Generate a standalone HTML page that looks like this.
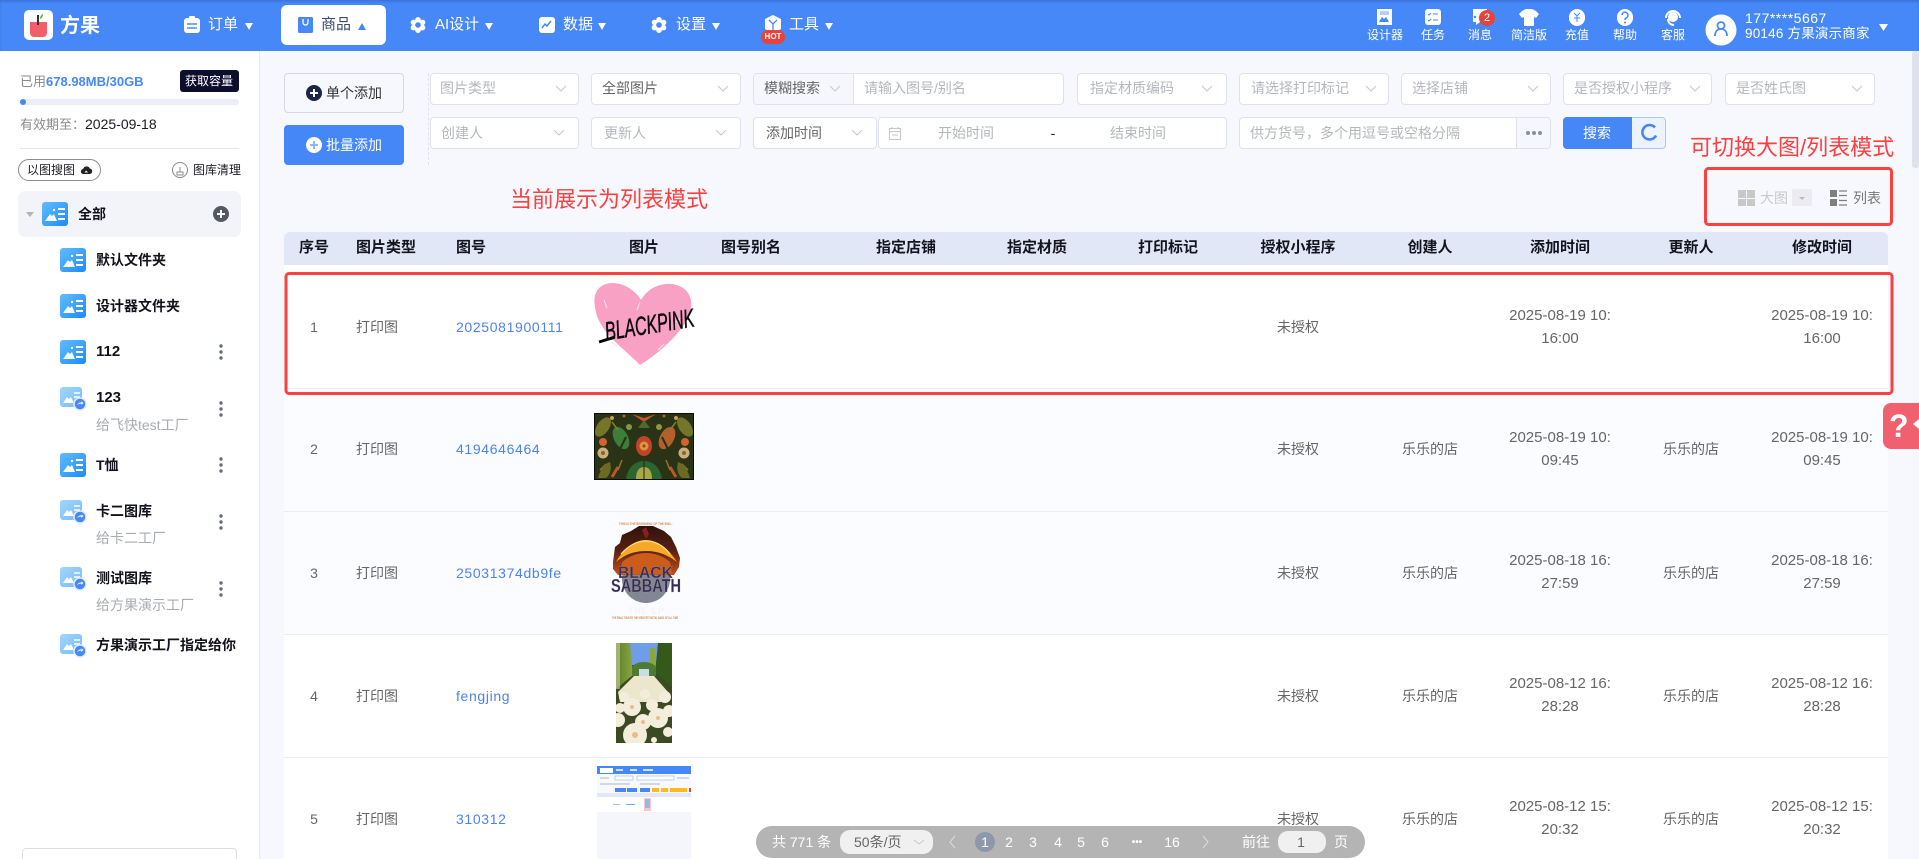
<!DOCTYPE html>
<html lang="zh"><head><meta charset="utf-8"><title>方果</title>
<style>
*{box-sizing:border-box;margin:0;padding:0}
html,body{width:1919px;height:859px;overflow:hidden;background:#f6f8fd}
body{position:relative;font-family:"Liberation Sans","Noto Sans CJK SC",sans-serif;font-size:14px;color:#666}
.a,.t,.c{position:absolute}
.t,.c{white-space:nowrap;line-height:20px;height:20px}
.c{transform:translateX(-50%)}
.b{font-weight:700}
.s{position:absolute;background:#fff;border:1px solid #dfe2ea;border-radius:4px}
.ph{color:#b4b7bd}
.n{color:#fff;font-size:15px}
.m{color:#fff;font-size:12px}
.h{font-size:15px;font-weight:700;color:#14141e}
.k{color:#666}
.l{color:#4c84ec;letter-spacing:.65px}
.tr{font-size:15px;color:#666}
.sb{font-weight:700;color:#12121c}
.su{color:#a9acb3}
.p{color:#fff;font-size:14px}
</style></head><body>

<!-- layout backgrounds -->
<div class="a" style="left:0;top:0;width:1919px;height:51px;background:#4688f7;box-shadow:inset 0 2px 3px -1px rgba(30,50,120,.35)"></div>
<div class="a" style="left:0;top:51px;width:260px;height:808px;background:#fff;border-right:1px solid #e8eaf3"></div>
<div class="a" style="left:1912px;top:51px;width:7px;height:808px;background:#f6f7fa"></div>
<div class="a" style="left:1912px;top:51px;width:7px;height:117px;background:#dfe2ea;border-radius:3px"></div>

<!-- nav active -->
<div class="a" style="left:281px;top:5px;width:105px;height:40px;background:#fff;border-radius:6px"></div>

<!-- sidebar blocks -->
<div class="a" style="left:180px;top:70px;width:59px;height:22px;background:#0d0d2d;border-radius:3px"></div>
<div class="a" style="left:20px;top:99px;width:219px;height:6px;background:#ebeef5;border-radius:3px"></div>
<div class="a" style="left:20px;top:99px;width:6px;height:6px;background:#4688f7;border-radius:3px"></div>
<div class="a" style="left:20px;top:148px;width:219px;height:1px;background:#e5e7ec"></div>
<div class="a" style="left:18px;top:159px;width:83px;height:22px;border:1px solid #8c8c8c;border-radius:11px"></div>
<div class="a" style="left:18px;top:191px;width:223px;height:46px;background:#f2f4f9;border-radius:7px"></div>
<div class="a" style="left:22px;top:848px;width:215px;height:20px;border:1px solid #dcdde4;border-radius:4px;background:#fff"></div>

<!-- buttons -->
<div class="a" style="left:284px;top:73px;width:120px;height:40px;border:1px solid #d5d8e0;border-radius:4px"></div>
<div class="a" style="left:284px;top:125px;width:120px;height:40px;background:#4587f6;border-radius:4px"></div>
<div class="a" style="left:428px;top:73px;height:92px;border-left:1px dashed #e0e2e8"></div>

<!-- filters -->
<div class="s" style="left:430px;top:73px;width:149px;height:32px"></div>
<div class="s" style="left:591px;top:73px;width:150px;height:32px"></div>
<div class="s" style="left:753px;top:73px;width:311px;height:32px"></div>
<div class="a" style="left:754px;top:74px;width:100px;height:30px;background:#f5f7fc;border-right:1px solid #dfe2ea;border-radius:3px 0 0 3px"></div>
<div class="s" style="left:1077px;top:73px;width:150px;height:32px"></div>
<div class="s" style="left:1239px;top:73px;width:150px;height:32px"></div>
<div class="s" style="left:1401px;top:73px;width:150px;height:32px"></div>
<div class="s" style="left:1563px;top:73px;width:149px;height:32px"></div>
<div class="s" style="left:1725px;top:73px;width:150px;height:32px"></div>
<div class="s" style="left:430px;top:117px;width:149px;height:32px"></div>
<div class="s" style="left:591px;top:117px;width:150px;height:32px"></div>
<div class="s" style="left:753px;top:117px;width:124px;height:32px"></div>
<div class="s" style="left:878px;top:117px;width:349px;height:32px"></div>
<div class="s" style="left:1239px;top:117px;width:312px;height:32px"></div>
<div class="a" style="left:1516px;top:118px;width:34px;height:30px;background:#f5f7fc;border-left:1px solid #dfe2ea;border-radius:0 3px 3px 0"></div>
<div class="a" style="left:1563px;top:117px;width:70px;height:32px;background:#4587f6;border-radius:4px 0 0 4px"></div>
<div class="a" style="left:1632px;top:117px;width:34px;height:32px;background:#ecf3fe;border:1px solid #a9c6fa;border-left:0;border-radius:0 4px 4px 0"></div>

<!-- table backgrounds -->
<div class="a" style="left:284px;top:232px;width:1604px;height:33px;background:#e1e7f6;border-radius:6px 6px 0 0"></div>
<div class="a" style="left:284px;top:265px;width:1604px;height:124px;background:#fff;border-bottom:1px solid #e9ecf3"></div>
<div class="a" style="left:284px;top:389px;width:1604px;height:123px;background:#fbfcff;border-bottom:1px solid #e9ecf3"></div>
<div class="a" style="left:284px;top:512px;width:1604px;height:123px;background:#fbfcff;border-bottom:1px solid #e9ecf3"></div>
<div class="a" style="left:284px;top:635px;width:1604px;height:123px;background:#fff;border-bottom:1px solid #e9ecf3"></div>
<div class="a" style="left:284px;top:758px;width:1604px;height:101px;background:#fff"></div>

<!-- all icons + thumbnails in page coords -->
<svg class="a" style="left:0;top:0" width="1919" height="859" viewBox="0 0 1919 859" fill="none">
<defs>
<linearGradient id="g" x1="0" y1="0" x2="1" y2="1"><stop offset="0" stop-color="#62bcfb"/><stop offset="1" stop-color="#1b8cfe"/></linearGradient>
<linearGradient id="fire" x1="0" y1="0" x2="0" y2="1"><stop offset="0" stop-color="#2e120c"/><stop offset=".5" stop-color="#5a2012"/><stop offset="1" stop-color="#c4501c"/></linearGradient>
<linearGradient id="wall" x1="0" y1="0" x2="1" y2="0"><stop offset="0" stop-color="#5c7e2a"/><stop offset="1" stop-color="#8aa73e"/></linearGradient>
<symbol id="f" viewBox="0 0 26 24"><rect width="26" height="24" rx="3" fill="url(#g)"/><path d="M3 19l5-7 2 2 2-2 3 7z" fill="#fff" opacity=".95"/><circle cx="12" cy="8" r="1.2" fill="#fff"/><path d="M16 7h7M16 12h7M16 17h7" stroke="#fff" stroke-width="2"/></symbol>
<symbol id="f2" viewBox="0 0 26 24"><rect width="22" height="20" rx="3" fill="url(#g)" opacity=".6"/><path d="M3 16l4-6 2 2 2-2 3 6z" fill="#fff"/><path d="M14 6h6M14 10h6M14 14h4" stroke="#fff" stroke-width="1.6"/><circle cx="20" cy="17" r="6" fill="#4688f7" stroke="#dfe9fd" stroke-width="1.5"/><path d="M17 18c1-2 3-3 5-2.500l-1-1.500 2.500 2-2.500 2 .5-1.200c-1.500-.5-3 .2-4.500 1.200z" fill="#fff"/></symbol>
<symbol id="ch" viewBox="0 0 12 8"><path d="M1 1l5 5 5-5" stroke="#c4c7cd" stroke-width="1"/></symbol>
<symbol id="d3" viewBox="0 0 4 16"><circle cx="2" cy="2" r="1.700" fill="#666c78"/><circle cx="2" cy="8" r="1.700" fill="#666c78"/><circle cx="2" cy="14" r="1.700" fill="#666c78"/></symbol>
<symbol id="gear" viewBox="0 0 16 16"><g fill="#fff"><circle cx="8" cy="8" r="5.500"/><circle cx="8" cy="2.800" r="2.800"/><circle cx="8" cy="13.200" r="2.800"/><circle cx="3.500" cy="5.400" r="2.800"/><circle cx="12.500" cy="5.400" r="2.800"/><circle cx="3.500" cy="10.600" r="2.800"/><circle cx="12.500" cy="10.600" r="2.800"/></g><circle cx="8" cy="8" r="2.800" fill="#4688f7"/></symbol>
<clipPath id="r5"><rect x="597" y="766" width="94" height="93"/></clipPath>
<clipPath id="r4"><rect x="616" y="643" width="56" height="100"/></clipPath>
<clipPath id="r2"><rect x="594" y="413" width="100" height="67"/></clipPath>
</defs>

<!-- logo -->
<rect x="24" y="10" width="29" height="30" rx="5" fill="#fff"/>
<path d="M30 22h17v11a4 4 0 0 1-4 4H34a4 4 0 0 1-4-4z" fill="#f0606a"/>
<path d="M38 15v10" stroke="#333" stroke-width="2"/><path d="M40 19c0-3 1-4 3-5 0 3-1 4-3 5z" fill="#5fb548"/>

<!-- nav icons -->
<rect x="184" y="18" width="16" height="15" rx="3" fill="#fff"/><rect x="189" y="16" width="6" height="4" rx="1" fill="#fff"/><path d="M187 24h10M187 28h10" stroke="#4688f7" stroke-width="1.500"/>
<rect x="298" y="17" width="15" height="16" rx="1.500" fill="#4688f7"/><path d="M303 19v3.500a2.500 2.500 0 0 0 5 0v-3.500" stroke="#fff" stroke-width="1.300"/>
<use href="#gear" x="410" y="17" width="16" height="16"/>
<rect x="539" y="17" width="16" height="16" rx="3" fill="#fff"/><path d="M542 28l3-4 2 2 4-5" stroke="#4688f7" stroke-width="1.500"/>
<use href="#gear" x="651" y="17" width="16" height="16"/>
<path d="M765 19l8-4 8 4v10l-8 4-8-4z" fill="#fff"/><path d="M769 20l4 4 4-4M773 24v7" stroke="#4688f7" stroke-width="1.300"/>
<rect x="761" y="30" width="24" height="14" rx="7" fill="#e5433c"/>
<!-- carets -->
<path d="M245 23h8l-4 7z" fill="#fff"/><path d="M358 30h8l-4-7z" fill="#4688f7"/><path d="M485 23h8l-4 7z" fill="#fff"/><path d="M598 23h8l-4 7z" fill="#fff"/><path d="M712 23h8l-4 7z" fill="#fff"/><path d="M825 23h8l-4 7z" fill="#fff"/>
<!-- right icons -->
<rect x="1377" y="9" width="15" height="16" fill="#fff"/><path d="M1379 22l3-5 2 2 2-2 3 5z" fill="#4688f7"/><rect x="1380" y="11" width="9" height="4" fill="#4688f7" opacity=".4"/>
<rect x="1425" y="9" width="16" height="16" rx="3" fill="#fff"/><path d="M1428 14l1 1 2-2M1428 20l1 1 2-2M1433 14h5M1433 20h5" stroke="#4688f7" stroke-width="1"/>
<path d="M1473 9h14v13h-7l-4 3v-3h-3z" fill="#fff"/><circle cx="1475" cy="17" r="1.200" fill="#4688f7"/>
<path d="M1522 11l4-2h6l4 2 3 3-3 4-2-1v9h-10v-9l-2 1-3-4z" fill="#fff"/>
<rect x="1569" y="9" width="16" height="17" rx="8" fill="#fff"/><path d="M1574 13l3 3 3-3M1577 16v6M1574 18h6" stroke="#4688f7" stroke-width="1"/>
<rect x="1617" y="9" width="16" height="17" rx="8" fill="#fff"/><path d="M1622 15a3 3 0 1 1 4 3l-1 1v1" stroke="#4688f7" stroke-width="1.500"/><circle cx="1625" cy="22.500" r="1" fill="#4688f7"/>
<path d="M1666 18a7 7 0 0 1 14 0" stroke="#fff" stroke-width="2"/><circle cx="1673" cy="17" r="5" fill="#fff"/><path d="M1668 19c0 4 3 6 6 6" stroke="#fff" stroke-width="2"/>
<circle cx="1721" cy="30" r="15.500" fill="#fff"/><circle cx="1721" cy="25.500" r="3.500" stroke="#4688f7" stroke-width="1.800"/><path d="M1715 36c0-4 2-7 6-7s6 3 6 7" stroke="#4688f7" stroke-width="1.800"/>
<path d="M1879 24h9l-4.500 7z" fill="#fff"/>

<!-- sidebar icons -->
<path d="M83.500 174a2.500 2.500 0 0 1-.3-5 3.500 3.500 0 0 1 6.600-.5 2.800 2.800 0 0 1 .2 5.500z" fill="#222"/><path d="M86.200 170.500l-1.800 2h3.600z" fill="#fff"/>
<circle cx="180" cy="170" r="7.500" stroke="#888" stroke-width="1"/><path d="M177 175v-3h6v3zM180 172v-5" stroke="#888" stroke-width="1"/>
<path d="M26 212h8l-4 5z" fill="#b0b3b8"/>
<use href="#f" x="42" y="202" width="26" height="24"/>
<circle cx="221" cy="214" r="8" fill="#555861"/><path d="M217 214h8M221 210v8" stroke="#fff" stroke-width="2"/>
<use href="#f" x="60" y="248" width="26" height="24"/>
<use href="#f" x="60" y="294" width="26" height="24"/>
<use href="#f" x="60" y="340" width="26" height="24"/>
<use href="#f" x="60" y="453" width="26" height="24"/>
<use href="#f2" x="60" y="387" width="26" height="24"/>
<use href="#f2" x="60" y="500" width="26" height="24"/>
<use href="#f2" x="60" y="567" width="26" height="24"/>
<use href="#f2" x="60" y="634" width="26" height="24"/>
<use href="#d3" x="219" y="344" width="4" height="16"/>
<use href="#d3" x="219" y="401" width="4" height="16"/>
<use href="#d3" x="219" y="457" width="4" height="16"/>
<use href="#d3" x="219" y="514" width="4" height="16"/>
<use href="#d3" x="219" y="581" width="4" height="16"/>

<!-- add buttons -->
<circle cx="314" cy="93" r="8" fill="#1a2548"/><path d="M310 93h8M314 89v8" stroke="#fff" stroke-width="2"/>
<circle cx="314" cy="145" r="8" fill="#fff"/><path d="M310 145h8M314 141v8" stroke="#8fb6fa" stroke-width="2"/>

<!-- chevrons -->
<use href="#ch" x="555" y="85" width="12" height="8"/>
<use href="#ch" x="717" y="85" width="12" height="8"/>
<use href="#ch" x="829" y="85" width="12" height="8"/>
<use href="#ch" x="1201" y="85" width="12" height="8"/>
<use href="#ch" x="1365" y="85" width="12" height="8"/>
<use href="#ch" x="1527" y="85" width="12" height="8"/>
<use href="#ch" x="1689" y="85" width="12" height="8"/>
<use href="#ch" x="1851" y="85" width="12" height="8"/>
<use href="#ch" x="553" y="129" width="12" height="8"/>
<use href="#ch" x="715" y="129" width="12" height="8"/>
<use href="#ch" x="851" y="129" width="12" height="8"/>
<!-- date + dots + refresh -->
<rect x="889.500" y="128.500" width="11" height="11" stroke="#c4c7cd"/><path d="M889 131.500h12M892 127v2M898 127v2M892 135h6" stroke="#c4c7cd"/>
<circle cx="1528" cy="133" r="2" fill="#8a8f99"/><circle cx="1534" cy="133" r="2" fill="#8a8f99"/><circle cx="1540" cy="133" r="2" fill="#8a8f99"/>
<path d="M1655 127.500a7.200 7.200 0 1 0 1 8" stroke="#4a86ee" stroke-width="2.600"/>

<!-- view switch -->
<rect x="1705.500" y="168.500" width="186" height="56" rx="3" stroke="#fb4040" stroke-width="3"/>
<g fill="#c8c8c8"><rect x="1738" y="190" width="8" height="8"/><rect x="1747" y="190" width="8" height="8"/><rect x="1738" y="199" width="8" height="7"/><rect x="1747" y="199" width="8" height="7"/></g>
<rect x="1792" y="189" width="20" height="17" rx="2" fill="#ececf0"/><path d="M1799 197h6l-3 3z" fill="#bbb"/>
<g fill="#7f7f7f"><rect x="1830" y="190" width="7" height="7"/><rect x="1830" y="199" width="7" height="7"/></g><path d="M1839 191h8M1839 195.500h8M1839 200.500h8M1839 205h8" stroke="#7f7f7f" stroke-width="1.300"/>
<rect x="286" y="273.500" width="1606" height="120" rx="3" stroke="#fb4040" stroke-width="3"/>

<!-- row1 heart -->
<path d="M640 365C628 352 604 336 597 316C592 300 594 288 606 284C618 280 634 288 641 300C648 288 660 283 672 284C686 286 693 296 691 308C689 322 676 336 664 347C656 354 648 360 640 365z" fill="#f9a1c4"/>
<path d="M604 300l3 8M640 302l-3 8M658 350l6-6M676 322l6-5M612 342l5 5" stroke="#fde2ec" stroke-width="1"/>
<path d="M599 342l16-5" stroke="#000" stroke-width="3"/>
<text transform="rotate(-9 646 322)" x="604" y="334" textLength="90" lengthAdjust="spacingAndGlyphs" font-family="Liberation Sans" font-size="26" font-style="italic" fill="#0b0b0b" stroke="#0b0b0b" stroke-width=".5">BLACKPINK</text>

<!-- row2 ornament -->
<g clip-path="url(#r2)"><rect x="594" y="413" width="100" height="67" fill="#2a3316"/>
<ellipse cx="603" cy="427" rx="6" ry="11" fill="#75762a" transform="rotate(35 603 427)"/><ellipse cx="685" cy="427" rx="6" ry="11" fill="#75762a" transform="rotate(-35 685 427)"/>
<ellipse cx="621" cy="438" rx="7" ry="12" fill="#3f7d3a" transform="rotate(-28 621 438)"/><ellipse cx="667" cy="438" rx="7" ry="12" fill="#b5602c" transform="rotate(28 667 438)"/>
<circle cx="629" cy="427" r="3" fill="#7f9a3d"/><circle cx="659" cy="427" r="3" fill="#8b9a3d"/>
<path d="M626 437l-9 18M662 437l9 18" stroke="#24331a" stroke-width="2"/>
<path d="M612 422l6 8M676 422l-6 8M600 470l6-6M688 470l-6-6M618 470l4-10M670 470l-4-10" stroke="#8b7a30" stroke-width="1.500"/>
<circle cx="603" cy="442" r="4" fill="#d2622f"/><circle cx="685" cy="442" r="4" fill="#d2622f"/>
<circle cx="603" cy="453" r="5.500" fill="#cfae7e"/><circle cx="603" cy="453" r="2" fill="#7a6a30"/><circle cx="684" cy="453" r="5.500" fill="#cfae7e"/><circle cx="684" cy="453" r="2" fill="#7a6a30"/>
<ellipse cx="644" cy="446" rx="8" ry="10" fill="#c0432a"/><circle cx="644" cy="446" r="4.500" fill="#d99a36"/><circle cx="644" cy="446" r="1.500" fill="#a33a20"/>
<path d="M626 479c2-12 9-18 18-18s16 6 18 18z" fill="#2c6530"/><path d="M636 479c0-8 3-12 8-12s8 4 8 12z" fill="#a9a846"/><path d="M644 461v18" stroke="#1e2812"/>
<path d="M632 414l12 4 12-4-12 8z" fill="#c2552a"/><path d="M644 420l-6 8h12z" fill="#4d6b2a"/>
<path d="M598 478c3-10 6-14 12-16 2 8 0 13-4 16zM690 478c-3-10-6-14-12-16-2 8 0 13 4 16z" fill="#6a6a22"/>
<path d="M612 477l6-10M676 477l-6-10" stroke="#c0552a" stroke-width="3"/>
<circle cx="612" cy="418" r="2" fill="#c9a050"/><circle cx="676" cy="418" r="2" fill="#c9a050"/><circle cx="624" cy="416" r="1.500" fill="#b5602c"/><circle cx="664" cy="416" r="1.500" fill="#b5602c"/>
<rect x="594.500" y="413.500" width="99" height="66" stroke="#0c0f06"/></g>

<!-- row3 poster -->
<text x="619" y="525" textLength="54" lengthAdjust="spacingAndGlyphs" font-family="Liberation Sans" font-size="4" font-weight="700" fill="#d08a50">THIS IS THE BEGINNING OF THE END...</text>
<circle cx="646" cy="579" r="24" fill="#818795"/>
<path d="M613 562l2-15 5-4 2-8 9-4 8-5 14 0 11 5 7 6 5 10 4 11-1 9-5 8h-56l-5-6z" fill="url(#fire)"/>
<path d="M616 562c8-14 19-22 30-22s22 8 31 22c-9-7-19-11-31-11s-22 4-30 11z" fill="#f7a828"/>
<path d="M621 554c8-9 16-13 25-13s17 4 24 13" stroke="#ffe07a" stroke-width="1.200"/>
<path d="M622 562c7-6 15-9 24-9s17 3 24 9l2 12h-52z" fill="#cc5c1c"/>
<path d="M642 530l4-3 3 7-3 5z" fill="#8a2018"/>
<text x="618" y="578" textLength="55" lengthAdjust="spacingAndGlyphs" font-family="Liberation Sans" font-size="17" font-weight="700" fill="#332e5c" stroke="#c9a88a" stroke-width=".2">BLACK</text>
<text x="611" y="592" textLength="70" lengthAdjust="spacingAndGlyphs" font-family="Liberation Sans" font-size="18" font-weight="700" fill="#332e5c" stroke="#c9a88a" stroke-width=".2">SABBATH</text>
<text x="628" y="614" textLength="36" font-family="Liberation Sans" font-size="9" font-weight="700" fill="#f2f3f6">THE EP</text>
<text x="612" y="619" textLength="66" lengthAdjust="spacingAndGlyphs" font-family="Liberation Sans" font-size="4" font-weight="700" fill="#d08a50">THE FINAL TOUR BY THE GREATEST METAL BAND OF ALL TIME</text>

<!-- row4 photo -->
<g clip-path="url(#r4)"><rect x="616" y="643" width="56" height="100" fill="#3b4a22"/>
<path d="M630 643h30v22h-30z" fill="#6f9de8"/>
<path d="M616 643h14l3 32-17 14z" fill="url(#wall)"/><path d="M616 643h4v46h-4z" fill="#dfe4c0" opacity=".5"/><path d="M672 643h-14l-3 30 17 14z" fill="#34591a"/><path d="M650 648l5 0 1 24-6-2z" fill="#8aa73e"/>
<path d="M632 668c2-8 22-8 24 0v8h-24z" fill="#4f7a36"/><rect x="639" y="669" width="10" height="7" fill="#c9dcea"/>
<path d="M618 692l16-16h20l14 16-4 10h-44z" fill="#ebe6cc"/>
<g fill="#f3eedc"><circle cx="635" cy="735" r="12"/><circle cx="658" cy="718" r="10"/><circle cx="643" cy="722" r="8"/><circle cx="632" cy="707" r="9"/><circle cx="665" cy="697" r="6"/><circle cx="618" cy="720" r="7"/><circle cx="652" cy="705" r="6"/><circle cx="620" cy="708" r="5"/><circle cx="669" cy="711" r="6"/><circle cx="624" cy="697" r="5"/><circle cx="645" cy="694" r="5"/><circle cx="654" cy="740" r="3"/><circle cx="668" cy="732" r="5"/></g>
<g fill="#e8bd8a"><circle cx="635" cy="735" r="3"/><circle cx="658" cy="718" r="2"/><circle cx="643" cy="722" r="2"/><circle cx="632" cy="707" r="2"/></g></g>

<!-- row5 mini screenshot -->
<g clip-path="url(#r5)"><rect x="597" y="766" width="94" height="93" fill="#f4f6fb"/>
<rect x="597" y="766" width="94" height="8" fill="#4688f7"/><rect x="600" y="768" width="13" height="5" fill="#fff"/><rect x="616" y="769" width="7" height="2" fill="#cfe0fd"/><rect x="630" y="769" width="7" height="2" fill="#cfe0fd"/><rect x="643" y="769" width="10" height="2" fill="#cfe0fd"/>
<rect x="597" y="774" width="94" height="27" fill="#f8f9fd"/>
<rect x="615" y="776" width="18" height="4" fill="#fff" stroke="#7aa6f6" stroke-width=".5"/><rect x="637" y="776" width="37" height="4" fill="#fff" stroke="#7aa6f6" stroke-width=".5"/>
<rect x="600" y="777" width="9" height="2" fill="#d5d7dd"/><rect x="677" y="777" width="12" height="2" fill="#d5d7dd"/>
<rect x="600" y="783" width="30" height="2" fill="#d5d7dd"/><rect x="640" y="783" width="20" height="2" fill="#d5d7dd"/>
<rect x="615" y="788" width="11" height="4" fill="#4688f7"/><rect x="627" y="788" width="10" height="4" fill="#4688f7"/><rect x="640" y="788" width="10" height="4" fill="#4688f7"/><rect x="652" y="788" width="7" height="4" fill="#fdb91e"/><rect x="661" y="788" width="7" height="4" fill="#fdb91e"/><rect x="670" y="788" width="17" height="4" fill="#fdb91e"/><rect x="689" y="788" width="2" height="4" fill="#e5433c"/>
<rect x="597" y="793" width="94" height="4" fill="#e1e7f6"/>
<rect x="597" y="797" width="94" height="15" fill="#fff"/><rect x="644" y="798" width="7" height="13" fill="#f2c9d0"/><rect x="645" y="799" width="5" height="9" fill="#9fb7da"/><rect x="626" y="804" width="9" height="1" fill="#7aa6f6"/><rect x="613" y="804" width="7" height="1" fill="#bbb"/></g>

<!-- help -->
<rect x="1883" y="403" width="50" height="46" rx="8" fill="#f0606f"/>
<path d="M1919 419l-6 5 6 5z" fill="#fff"/>
</svg>

<!-- nav text -->
<div class="t b" style="left:60px;top:14px;color:#fff;font-size:20px;line-height:24px;height:24px">方果</div>
<div class="t n" style="left:208px;top:15px">订单</div>
<div class="t n" style="left:321px;top:15px;color:#3b4a6b">商品</div>
<div class="t n" style="left:435px;top:15px">AI设计</div>
<div class="t n" style="left:563px;top:15px">数据</div>
<div class="t n" style="left:676px;top:15px">设置</div>
<div class="t n" style="left:789px;top:15px">工具</div>
<div class="t" style="left:761px;top:27px;width:24px;text-align:center;color:#fff;font-size:8px;font-weight:700">HOT</div>

<div class="c m" style="left:1385px;top:25px">设计器</div>
<div class="c m" style="left:1433px;top:25px">任务</div>
<div class="c m" style="left:1480px;top:25px">消息</div>
<div class="c m" style="left:1529px;top:25px">简洁版</div>
<div class="c m" style="left:1577px;top:25px">充值</div>
<div class="c m" style="left:1625px;top:25px">帮助</div>
<div class="c m" style="left:1673px;top:25px">客服</div>
<div class="a" style="left:1479px;top:10px;width:16px;height:16px;border-radius:8px;background:#e5433c;color:#fff;font-size:11px;line-height:16px;text-align:center">2</div>
<div class="t" style="left:1745px;top:8px;color:#fff;font-size:14px;letter-spacing:.5px">177****5667</div>
<div class="t" style="left:1745px;top:24px;color:#fff;font-size:13.500px;letter-spacing:.2px">90146 方果演示商家</div>

<!-- sidebar text -->
<div class="t" style="left:20px;top:72px;font-size:13px;color:#8a8a8a">已用<span style="font-weight:700;color:#4688f7">678.98MB/30GB</span></div>
<div class="t" style="left:185px;top:71px;font-size:12px;color:#fff">获取容量</div>
<div class="t" style="left:20px;top:114px;font-size:13px;color:#8a8a8a">有效期至：<span style="font-size:14px;color:#1a1a24">2025-09-18</span></div>
<div class="t" style="left:27px;top:160px;font-size:12px;color:#1a1a24">以图搜图</div>
<div class="t" style="left:193px;top:160px;font-size:12px;color:#1a1a24">图库清理</div>
<div class="t sb" style="left:78px;top:204px">全部</div>
<div class="t sb" style="left:96px;top:250px">默认文件夹</div>
<div class="t sb" style="left:96px;top:296px">设计器文件夹</div>
<div class="t sb" style="left:96px;top:342px;font-size:15px">112</div>
<div class="t sb" style="left:96px;top:388px;font-size:15px">123</div>
<div class="t su" style="left:96px;top:415px">给飞快test工厂</div>
<div class="t sb" style="left:96px;top:455px">T恤</div>
<div class="t sb" style="left:96px;top:501px">卡二图库</div>
<div class="t su" style="left:96px;top:528px">给卡二工厂</div>
<div class="t sb" style="left:96px;top:568px">测试图库</div>
<div class="t su" style="left:96px;top:595px">给方果演示工厂</div>
<div class="t sb" style="left:96px;top:635px">方果演示工厂指定给你</div>

<!-- buttons + filters text -->
<div class="t" style="left:326px;top:83px;color:#333">单个添加</div>
<div class="t" style="left:326px;top:135px;color:#fff">批量添加</div>
<div class="t ph" style="left:440px;top:78px">图片类型</div>
<div class="t k" style="left:602px;top:78px">全部图片</div>
<div class="t k" style="left:764px;top:78px">模糊搜索</div>
<div class="t ph" style="left:864px;top:78px">请输入图号/别名</div>
<div class="t ph" style="left:1090px;top:78px">指定材质编码</div>
<div class="t ph" style="left:1251px;top:78px">请选择打印标记</div>
<div class="t ph" style="left:1412px;top:78px">选择店铺</div>
<div class="t ph" style="left:1574px;top:78px">是否授权小程序</div>
<div class="t ph" style="left:1736px;top:78px">是否姓氏图</div>
<div class="t ph" style="left:441px;top:123px">创建人</div>
<div class="t ph" style="left:604px;top:123px">更新人</div>
<div class="t k" style="left:766px;top:123px">添加时间</div>
<div class="c ph" style="left:966px;top:123px">开始时间</div>
<div class="c" style="left:1053px;top:123px;color:#222">-</div>
<div class="c ph" style="left:1138px;top:123px">结束时间</div>
<div class="t ph" style="left:1250px;top:123px">供方货号，多个用逗号或空格分隔</div>
<div class="c" style="left:1597px;top:123px;color:#fff">搜索</div>

<!-- annotations -->
<div class="t" style="left:510px;top:188px;font-size:22px;line-height:24px;height:24px;color:#fb4040">当前展示为列表模式</div>
<div class="t" style="left:1690px;top:136px;font-size:22px;line-height:24px;height:24px;color:#fb4040">可切换大图/列表模式</div>
<div class="t" style="left:1760px;top:188px;color:#c8c8c8">大图</div>
<div class="t" style="left:1853px;top:188px;color:#777">列表</div>

<!-- header -->
<div class="c h" style="left:314px;top:238px">序号</div>
<div class="c h" style="left:386px;top:238px">图片类型</div>
<div class="t h" style="left:456px;top:238px">图号</div>
<div class="c h" style="left:644px;top:238px">图片</div>
<div class="c h" style="left:751px;top:238px">图号别名</div>
<div class="c h" style="left:906px;top:238px">指定店铺</div>
<div class="c h" style="left:1037px;top:238px">指定材质</div>
<div class="c h" style="left:1168px;top:238px">打印标记</div>
<div class="c h" style="left:1298px;top:238px">授权小程序</div>
<div class="c h" style="left:1430px;top:238px">创建人</div>
<div class="c h" style="left:1560px;top:238px">添加时间</div>
<div class="c h" style="left:1691px;top:238px">更新人</div>
<div class="c h" style="left:1822px;top:238px">修改时间</div>

<!-- row 1 -->
<div class="c k" style="left:314px;top:317px">1</div>
<div class="t k" style="left:356px;top:317px">打印图</div>
<div class="t l" style="left:456px;top:317px">2025081900111</div>
<div class="c k" style="left:1298px;top:317px">未授权</div>
<div class="c tr" style="left:1560px;top:306px">2025-08-19 10:</div><div class="c tr" style="left:1560px;top:329px">16:00</div>
<div class="c tr" style="left:1822px;top:306px">2025-08-19 10:</div><div class="c tr" style="left:1822px;top:329px">16:00</div>
<!-- row 2 -->
<div class="c k" style="left:314px;top:439px">2</div>
<div class="t k" style="left:356px;top:439px">打印图</div>
<div class="t l" style="left:456px;top:439px">4194646464</div>
<div class="c k" style="left:1298px;top:439px">未授权</div>
<div class="c k" style="left:1430px;top:439px">乐乐的店</div>
<div class="c tr" style="left:1560px;top:428px">2025-08-19 10:</div><div class="c tr" style="left:1560px;top:451px">09:45</div>
<div class="c k" style="left:1691px;top:439px">乐乐的店</div>
<div class="c tr" style="left:1822px;top:428px">2025-08-19 10:</div><div class="c tr" style="left:1822px;top:451px">09:45</div>
<!-- row 3 -->
<div class="c k" style="left:314px;top:563px">3</div>
<div class="t k" style="left:356px;top:563px">打印图</div>
<div class="t l" style="left:456px;top:563px">25031374db9fe</div>
<div class="c k" style="left:1298px;top:563px">未授权</div>
<div class="c k" style="left:1430px;top:563px">乐乐的店</div>
<div class="c tr" style="left:1560px;top:551px">2025-08-18 16:</div><div class="c tr" style="left:1560px;top:574px">27:59</div>
<div class="c k" style="left:1691px;top:563px">乐乐的店</div>
<div class="c tr" style="left:1822px;top:551px">2025-08-18 16:</div><div class="c tr" style="left:1822px;top:574px">27:59</div>
<!-- row 4 -->
<div class="c k" style="left:314px;top:686px">4</div>
<div class="t k" style="left:356px;top:686px">打印图</div>
<div class="t l" style="left:456px;top:686px">fengjing</div>
<div class="c k" style="left:1298px;top:686px">未授权</div>
<div class="c k" style="left:1430px;top:686px">乐乐的店</div>
<div class="c tr" style="left:1560px;top:674px">2025-08-12 16:</div><div class="c tr" style="left:1560px;top:697px">28:28</div>
<div class="c k" style="left:1691px;top:686px">乐乐的店</div>
<div class="c tr" style="left:1822px;top:674px">2025-08-12 16:</div><div class="c tr" style="left:1822px;top:697px">28:28</div>
<!-- row 5 -->
<div class="c k" style="left:314px;top:809px">5</div>
<div class="t k" style="left:356px;top:809px">打印图</div>
<div class="t l" style="left:456px;top:809px">310312</div>
<div class="c k" style="left:1298px;top:809px">未授权</div>
<div class="c k" style="left:1430px;top:809px">乐乐的店</div>
<div class="c tr" style="left:1560px;top:797px">2025-08-12 15:</div><div class="c tr" style="left:1560px;top:820px">20:32</div>
<div class="c k" style="left:1691px;top:809px">乐乐的店</div>
<div class="c tr" style="left:1822px;top:797px">2025-08-12 15:</div><div class="c tr" style="left:1822px;top:820px">20:32</div>

<!-- help ? -->
<div class="t b" style="left:1889px;top:409px;color:#fff;font-size:32px;line-height:34px;height:34px">?</div>

<!-- pagination -->
<div class="a" style="left:756px;top:826px;width:609px;height:32px;background:#b4b4b4;border-radius:16px"></div>
<div class="a" style="left:840px;top:830px;width:93px;height:24px;background:#f0f0f0;border-radius:10px"></div>
<div class="a" style="left:1278px;top:831px;width:48px;height:22px;background:#f0f0f0;border-radius:10px"></div>
<div class="a" style="left:975px;top:832px;width:20px;height:20px;background:#8d98ad;border-radius:10px"></div>
<svg class="a" style="left:0;top:0" width="1919" height="859" fill="none"><path d="M955 836l-5 6 5 6M1203 836l5 6-5 6" stroke="#dcdcdc" stroke-width="1"/><path d="M914 840l5 4 5-4" stroke="#c8c8c8"/></svg>
<div class="t p" style="left:772px;top:832px">共 771 条</div>
<div class="t" style="left:854px;top:832px;color:#666">50条/页</div>
<div class="c p" style="left:985px;top:832px">1</div>
<div class="c p" style="left:1009px;top:832px">2</div>
<div class="c p" style="left:1033px;top:832px">3</div>
<div class="c p" style="left:1058px;top:832px">4</div>
<div class="c p" style="left:1081px;top:832px">5</div>
<div class="c p" style="left:1105px;top:832px">6</div>
<div class="c p b" style="left:1137px;top:833px;font-size:10px">•••</div>
<div class="c p" style="left:1172px;top:832px">16</div>
<div class="t p" style="left:1242px;top:832px">前往</div>
<div class="c" style="left:1301px;top:832px;color:#666">1</div>
<div class="t p" style="left:1334px;top:832px">页</div>
</body></html>
